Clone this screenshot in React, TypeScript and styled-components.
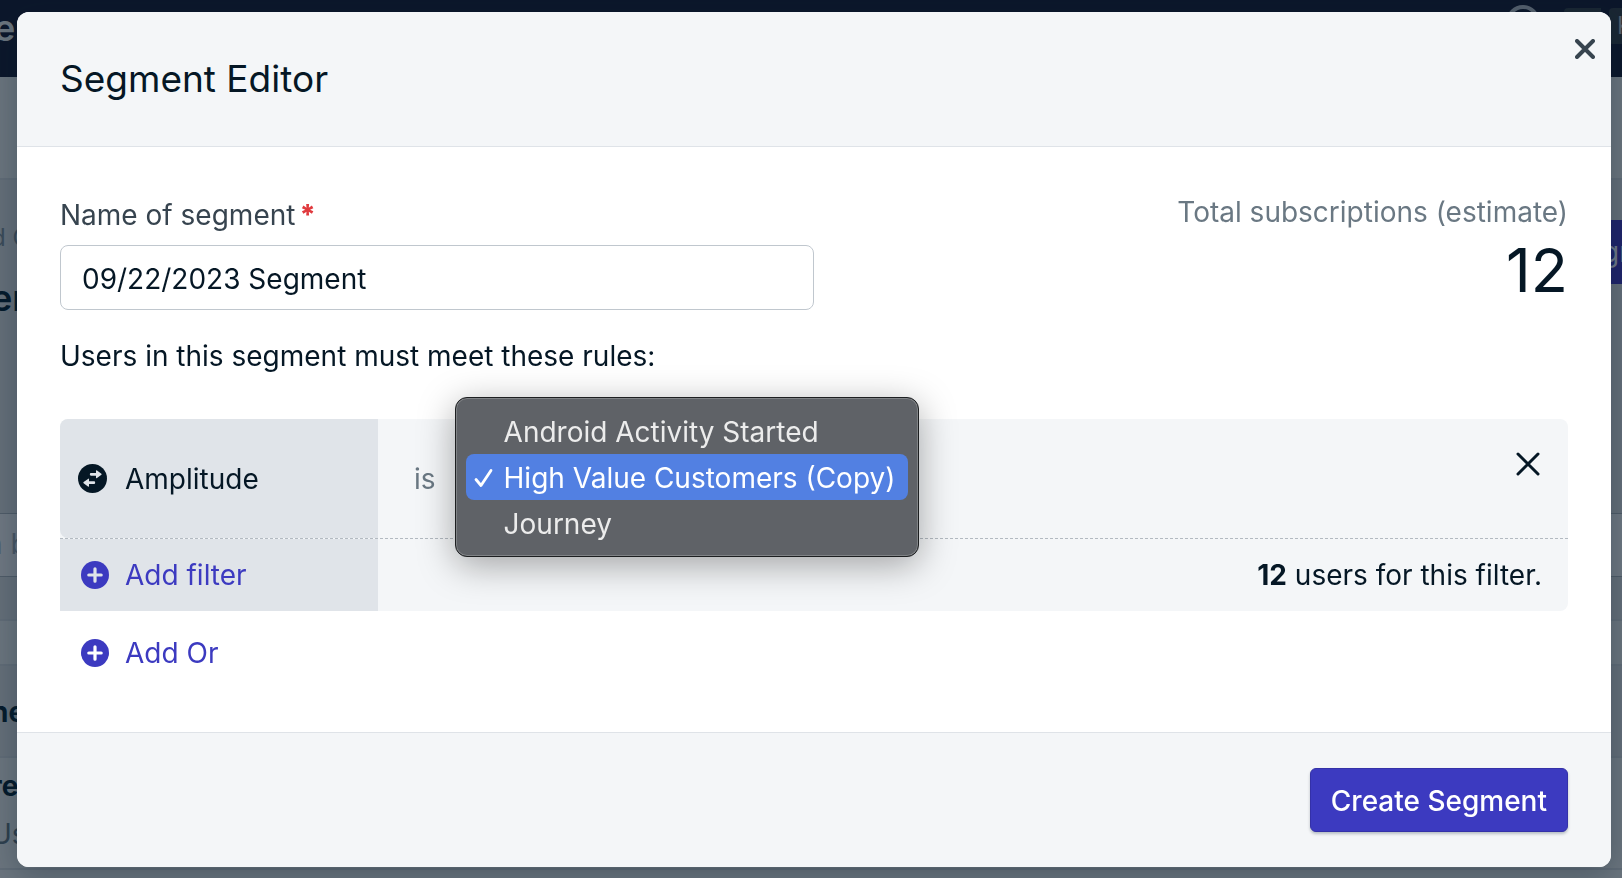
import React, { useState } from "react";
import styled, { createGlobalStyle } from "styled-components";

const GlobalStyle = createGlobalStyle`
  *, *::before, *::after { box-sizing: border-box; }
  body { margin: 0; background: #6b757e; overflow: hidden; }
  body, button, input, select {
    font-family: Inter, "Liberation Sans", sans-serif;
    font-size: 28px;
    line-height: 36px;
    color: #051b2c;
  }
  h1, h2, p, ul { margin: 0; padding: 0; }
`;

const ink = "#051725";
const brand = "#3c3ac0";

/* Dimmed page behind the dialog */
const Page = styled.div`
  height: 100vh;
  overflow: hidden;
  white-space: nowrap;
`;

const NavBar = styled.div`
  display: flex;
  justify-content: space-between;
  height: 77px;
  padding-top: 8px;
  background: #0c172b;
`;

const Brand = styled.span`
  font-size: 36px;
  line-height: 40px;
  font-weight: 600;
  text-indent: -6px;
  color: #6b757e;
`;

const NavTools = styled.div`
  display: flex;
  align-items: flex-start;
  gap: 8px;
`;

const HelpRing = styled.span`
  width: 34px;
  height: 34px;
  margin: -3px 16px 0 0;
  border: 4px solid #56616e;
  border-radius: 50%;
`;

const NavChip = styled.span<{ $w: number }>`
  width: ${(p) => p.$w}px;
  height: 36px;
  padding-left: 8px;
  border-radius: 4px 0 0 4px;
  background: #1a2733;
  color: #56616e;
  font-size: 24px;
  overflow: hidden;
`;

const Band = styled.div<{ $h: number; $bg?: string; $top?: number }>`
  display: flex;
  flex-direction: column;
  gap: 12px;
  height: ${(p) => p.$h}px;
  padding-top: ${(p) => p.$top ?? 0}px;
  border-bottom: 2px solid #616c77;
  background: ${(p) => p.$bg ?? "#6b757e"};
  text-indent: -9px;
`;

const Heading = styled.div`
  display: flex;
  justify-content: space-between;
  height: 64px;
`;

const Titles = styled.div`
  display: flex;
  flex-direction: column;
  gap: 18px;
`;

const Crumb = styled.span`
  font-size: 24px;
  color: #3b4b59;
`;

const PageTitle = styled.span`
  font-size: 36px;
  line-height: 48px;
  font-weight: 600;
`;

const PageAction = styled.span`
  width: 24px;
  padding: 14px 0 14px 4px;
  background: #20246a;
  color: #6f7888;
  text-indent: 0;
  overflow: hidden;
`;

const SearchBox = styled.div`
  height: 64px;
  margin-top: 217px;
  padding: 12px 0;
  border: solid #505c68;
  border-width: 1px 0;
  background: #6f7882;
  color: #4a5765;
  text-indent: -14px;
`;

const Strong = styled.span`
  font-weight: 700;
`;

const Muted = styled.span`
  color: #2f404e;
`;

/* Dialog */
const Overlay = styled.div`
  position: fixed;
  inset: 0;
  display: grid;
  padding: 12px 11px 11px 17px;
`;

const Dialog = styled.section`
  display: grid;
  grid-template-rows: auto 1fr auto;
  border-radius: 12px;
  background: #fff;
  box-shadow: 0 8px 32px rgba(5, 27, 44, 0.3);
  overflow: hidden;
`;

const DialogHeader = styled.header`
  display: flex;
  justify-content: space-between;
  padding: 43px 10px 43px 43px;
  border-bottom: 1px solid #dfe3e8;
  background: #f4f6f8;
`;

const DialogTitle = styled.h1`
  font-size: 37px;
  line-height: 48px;
  font-weight: 400;
  color: ${ink};
`;

const IconButton = styled.button`
  display: grid;
  place-items: center;
  width: 32px;
  height: 32px;
  padding: 0;
  border: 0;
  background: none;
  color: ${ink};
  cursor: pointer;
`;

const CloseButton = styled(IconButton)`
  margin-top: -22px;
  color: #37444f;
`;

const DialogBody = styled.div`
  padding: 47px 43px 0;
`;

const TopRow = styled.div`
  display: flex;
  justify-content: space-between;
  align-items: flex-start;
`;

const Field = styled.div`
  display: flex;
  flex-direction: column;
  width: 50%;
  padding-top: 3px;
`;

const Label = styled.label`
  line-height: 36px;
  margin-bottom: 12px;
  color: #37444f;
`;

const Required = styled.span`
  margin-left: 4px;
  color: #e03a3e;
  font-weight: 800;
`;

const TextInput = styled.input`
  width: 100%;
  height: 65px;
  padding: 2px 21px 0;
  border: 1px solid #c0c7ce;
  border-radius: 8px;
  background: #fff;
  color: ${ink};
`;

const Estimate = styled.div`
  text-align: right;
  color: #6a7883;
`;

const EstimateCount = styled.p`
  font-size: 61px;
  line-height: 80px;
  color: ${ink};
`;

const RulesText = styled.p`
  margin: 28px 0 45px;
  color: ${ink};
`;

const FilterGroup = styled.div`
  border-radius: 8px;
  background: #f4f6f8;
`;

const FilterRow = styled.div<{ $footer?: boolean }>`
  display: grid;
  grid-template-columns: 318px 1fr;
  height: ${(p) => (p.$footer ? 72 : 120)}px;
  border-bottom: ${(p) => (p.$footer ? "0" : "1px dashed #b3bac1")};
`;

const Source = styled.div<{ $footer?: boolean }>`
  display: flex;
  align-items: center;
  padding-left: ${(p) => (p.$footer ? 21 : 18)}px;
  gap: ${(p) => (p.$footer ? 16 : 18)}px;
  border-radius: ${(p) => (p.$footer ? "0" : "8px 0 0 8px")};
  background: #e0e4e9;
  color: ${ink};
`;

const Condition = styled.div`
  display: flex;
  align-items: center;
  padding: 0 24px 0 36px;
  color: #6a7883;
`;

const SelectWrap = styled.div`
  position: relative;
  margin-left: 36px;
`;

const Select = styled.select`
  width: 400px;
  height: 60px;
  padding: 0 16px;
  border: 1px solid #c0c7ce;
  border-radius: 8px;
  background: #fff;
`;

const Menu = styled.ul`
  position: absolute;
  top: -52px;
  left: -17px;
  width: 464px;
  padding: 10px;
  border: 1px solid #1d1f21;
  border-radius: 12px;
  background: #5f6267;
  box-shadow: inset 0 0 0 1px #808386, 0 8px 36px rgba(0, 0, 0, 0.34);
  list-style: none;
`;

const Option = styled.button<{ $on: boolean }>`
  display: grid;
  grid-template-columns: 38px 1fr;
  align-items: center;
  width: 100%;
  height: 46px;
  padding: 2px 0 0;
  border: 0;
  border-radius: 8px;
  background: ${(p) => (p.$on ? "#5280e2" : "transparent")};
  color: ${(p) => (p.$on ? "#fff" : "#ececec")};
  text-align: left;
  white-space: nowrap;
`;

const RemoveButton = styled(IconButton)`
  margin: 0 0 30px auto;
`;

const FilterCount = styled.p`
  align-self: center;
  padding-right: 26px;
  text-align: right;
  color: ${ink};
`;

const AddButton = styled.button`
  display: flex;
  align-items: center;
  gap: 16px;
  padding: 0;
  border: 0;
  background: none;
  color: ${brand};
  cursor: pointer;
`;

const AddOrRow = styled.div`
  padding: 24px 21px;
`;

const DialogFooter = styled.footer`
  display: flex;
  justify-content: flex-end;
  padding: 35px 43px;
  border-top: 1px solid #dfe3e8;
  background: #f4f6f8;
`;

const PrimaryButton = styled.button`
  height: 64px;
  padding: 2px 20px 0;
  border: 1px solid #3431a8;
  border-radius: 6px;
  background: ${brand};
  box-shadow: 0 2px 3px rgba(5, 27, 44, 0.25);
  color: #fff;
  font-weight: 500;
  cursor: pointer;
`;

const Cross = ({ size, stroke }: { size: number; stroke: number }) => (
  <svg width={size} height={size} viewBox={`0 0 ${size} ${size}`} aria-hidden="true">
    <path
      d={`M2 2L${size - 2} ${size - 2}M${size - 2} 2L2 ${size - 2}`}
      stroke="currentColor"
      strokeWidth={stroke}
      strokeLinecap="round"
      fill="none"
    />
  </svg>
);

const PlusIcon = ({ hole }: { hole: string }) => (
  <svg width="28" height="28" viewBox="0 0 28 28" aria-hidden="true">
    <circle cx="14" cy="14" r="14" fill="currentColor" />
    <path d="M14 7.8V20.2M7.8 14H20.2" stroke={hole} strokeWidth="3.2" strokeLinecap="round" />
  </svg>
);

const SwapIcon = () => (
  <svg width="29" height="29" viewBox="0 0 29 29" aria-hidden="true">
    <circle cx="14.5" cy="14.5" r="14.5" fill={ink} />
    <path
      d="M13 8.9H18V7Q18 5.7 19 6.5L23.4 9.7Q24 10.2 23.4 10.8L19 14.1Q18 14.8 18 13.6V11.7H13Q11.8 11.7 11.8 10.3Q11.8 8.9 13 8.9Z"
      fill="#e0e4e9"
    />
    <path
      d="M16 17.3H11V15.4Q11 14.1 10 14.9L5.6 18.1Q5 18.7 5.6 19.3L10 22.5Q11 23.2 11 22V20.1H16Q17.2 20.1 17.2 18.7Q17.2 17.3 16 17.3Z"
      fill="#e0e4e9"
    />
  </svg>
);

const CheckIcon = () => (
  <svg width="20" height="20" viewBox="0 0 20 20" aria-hidden="true">
    <path
      d="M2 11.5L7 17.5L17 2.5"
      stroke="currentColor"
      strokeWidth="2.8"
      strokeLinecap="round"
      strokeLinejoin="round"
      fill="none"
    />
  </svg>
);

const CheckSlot = styled.span`
  display: flex;
  padding-left: 8px;
`;

const cohorts = ["Android Activity Started", "High Value Customers (Copy)", "Journey"];

export default function App() {
  const [name, setName] = useState("09/22/2023 Segment");
  const [cohort, setCohort] = useState(cohorts[1]);

  return (
    <>
      <GlobalStyle />
      <Page aria-hidden="true">
        <NavBar>
          <Brand>e</Brand>
          <NavTools>
            <HelpRing />
            <NavChip $w={37} />
            <NavChip $w={13}>K</NavChip>
          </NavTools>
        </NavBar>
        <Band $h={103} />
        <Band $h={441} $bg="#656f79" $top={40}>
          <Heading>
            <Titles>
              <Crumb>d C</Crumb>
              <PageTitle>er</PageTitle>
            </Titles>
            <PageAction>gm</PageAction>
          </Heading>
          <SearchBox>n b</SearchBox>
        </Band>
        <Band $h={45} />
        <Band $h={92} $bg="#656f79" $top={28}>
          <Strong>ne</Strong>
        </Band>
        <Band $h={112} $top={10}>
          <Strong>re</Strong>
          <Muted>Us</Muted>
        </Band>
      </Page>
      <Overlay>
        <Dialog role="dialog" aria-modal="true" aria-labelledby="dialog-title">
          <DialogHeader>
            <DialogTitle id="dialog-title">Segment Editor</DialogTitle>
            <CloseButton aria-label="Close">
              <Cross size={20} stroke={4} />
            </CloseButton>
          </DialogHeader>
          <DialogBody>
            <TopRow>
              <Field>
                <Label htmlFor="segment-name">
                  Name of segment<Required>*</Required>
                </Label>
                <TextInput
                  id="segment-name"
                  value={name}
                  onChange={(e) => setName(e.target.value)}
                />
              </Field>
              <Estimate>
                <p>Total subscriptions (estimate)</p>
                <EstimateCount>12</EstimateCount>
              </Estimate>
            </TopRow>
            <RulesText>Users in this segment must meet these rules:</RulesText>
            <FilterGroup>
              <FilterRow>
                <Source>
                  <SwapIcon />
                  Amplitude
                </Source>
                <Condition>
                  <label htmlFor="cohort">is</label>
                  <SelectWrap>
                    <Select
                      id="cohort"
                      value={cohort}
                      onChange={(e) => setCohort(e.target.value)}
                    >
                      {cohorts.map((c) => (
                        <option key={c}>{c}</option>
                      ))}
                    </Select>
                    <Menu>
                      {cohorts.map((c) => (
                        <li key={c}>
                          <Option $on={c === cohort} onClick={() => setCohort(c)}>
                            <CheckSlot>{c === cohort && <CheckIcon />}</CheckSlot>
                            {c}
                          </Option>
                        </li>
                      ))}
                    </Menu>
                  </SelectWrap>
                  <RemoveButton aria-label="Remove filter">
                    <Cross size={24} stroke={3} />
                  </RemoveButton>
                </Condition>
              </FilterRow>
              <FilterRow $footer>
                <Source $footer>
                  <AddButton>
                    <PlusIcon hole="#e0e4e9" />
                    Add filter
                  </AddButton>
                </Source>
                <FilterCount>
                  <Strong>12</Strong> users for this filter.
                </FilterCount>
              </FilterRow>
            </FilterGroup>
            <AddOrRow>
              <AddButton>
                <PlusIcon hole="#fff" />
                Add Or
              </AddButton>
            </AddOrRow>
          </DialogBody>
          <DialogFooter>
            <PrimaryButton>Create Segment</PrimaryButton>
          </DialogFooter>
        </Dialog>
      </Overlay>
    </>
  );
}
